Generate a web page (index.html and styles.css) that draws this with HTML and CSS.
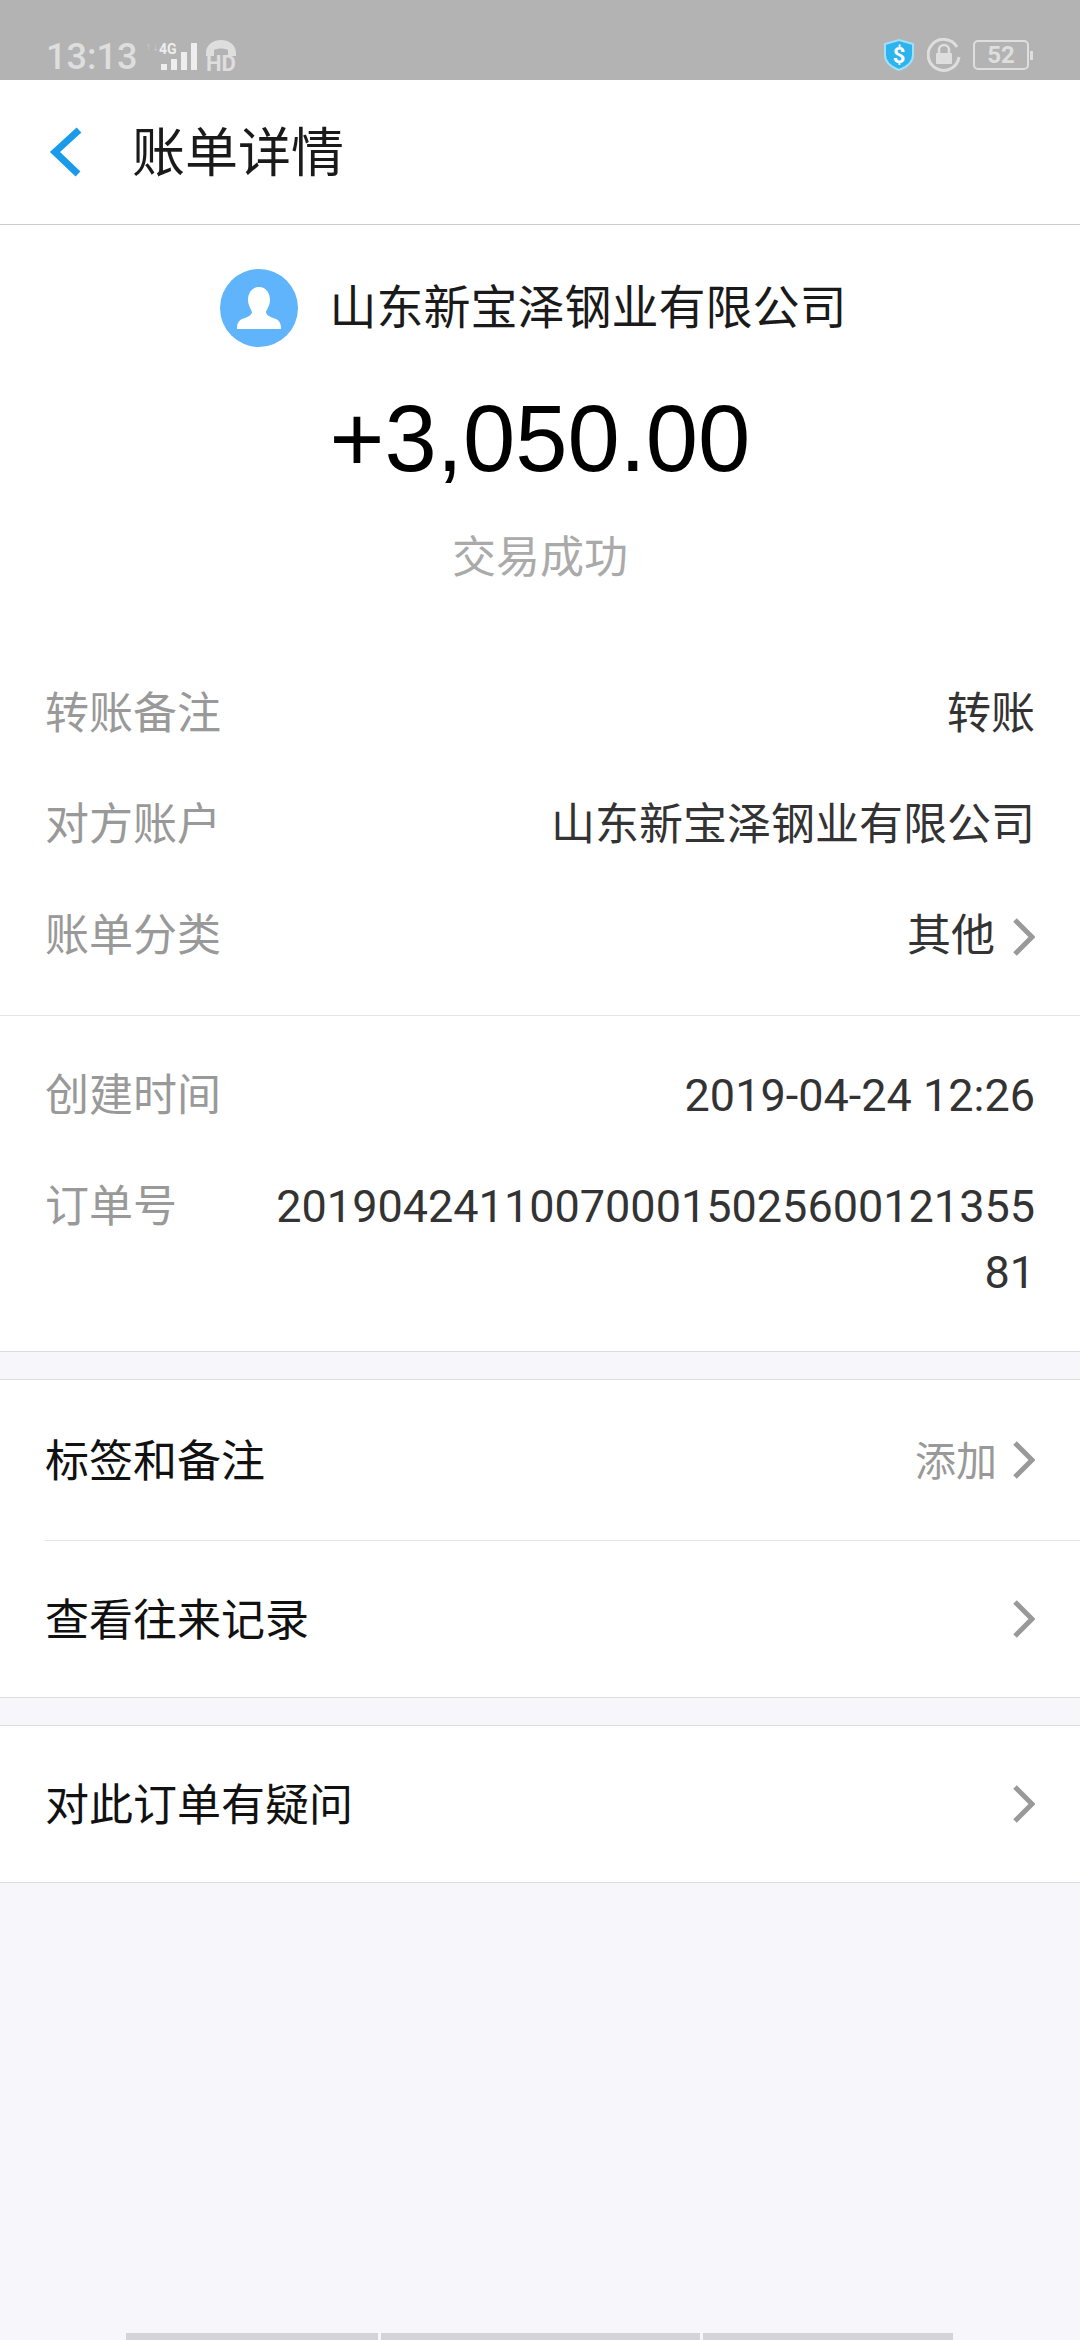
FILE: index.html
```html
<!DOCTYPE html>
<html lang="zh-CN">
<head>
    <title>账单详情</title>
    <link rel="stylesheet" href="styles.css">
</head>
<body>
    <div class="status-bar">
        <div class="status-left">
            <span class="time">13:13</span>
            <svg class="signal" width="54" height="30" viewBox="0 0 54 30">
                <text x="0" y="8" class="tiny">↑↓</text>
                <text x="14" y="12" class="net">4G</text>
                <rect x="16" y="22" width="6" height="6"/>
                <rect x="26" y="17" width="6" height="11"/>
                <rect x="36" y="10" width="6" height="18"/>
                <rect x="46" y="1" width="6" height="27"/>
            </svg>
            <svg class="hd" width="32" height="34" viewBox="0 0 32 34">
                <path d="M1 13C1 4 9 0 16 0s15 4 15 13v3h-8v-6c-4-2-10-2-14 0v6H1z"/>
                <text x="1" y="31" class="hd-text" textLength="30" lengthAdjust="spacingAndGlyphs">HD</text>
            </svg>
        </div>
        <div class="status-right">
            <svg width="32" height="34" viewBox="0 0 32 34">
                <path d="M16 2l14 4v11c0 8-6 12-14 15C8 29 2 25 2 17V6z" fill="#2db4ee" stroke="#9fe0fb" stroke-width="2"/>
                <text x="16" y="25" class="dollar">$</text>
            </svg>
            <svg width="34" height="34" viewBox="0 0 34 34">
                <path d="M30 9A15.500 15.500 0 1 0 32 19" fill="none" stroke="#dedede" stroke-width="3"/>
                <rect x="9" y="15" width="16" height="11" rx="1" fill="#dedede"/>
                <path d="M12 15v-3a5 5 0 0 1 10 0v3" fill="none" stroke="#dedede" stroke-width="2.500"/>
            </svg>
            <div class="battery">
                <div class="battery-body">52</div>
                <div class="battery-tip"></div>
            </div>
        </div>
    </div>

    <div class="nav">
        <svg class="back" width="34" height="50" viewBox="0 0 34 50">
            <path d="M30 3L6 25l23 22" fill="none" stroke="#1a9bea" stroke-width="7"/>
        </svg>
        <h1>账单详情</h1>
    </div>

    <div class="section">
        <div class="summary">
            <div class="payee">
                <svg width="78" height="78" viewBox="0 0 78 78">
                    <circle cx="39" cy="39" r="39" fill="#5fb4fc"/>
                    <path d="M39 18c7 0 11 6 11 13 0 5-3 9-4 12 0 3 4 5 10 7 4 2 5 5 5 10H17c0-5 1-8 5-10 6-2 10-4 10-7-1-3-4-7-4-12 0-7 4-13 11-13z" fill="#fff"/>
                </svg>
                <span class="payee-name">山东新宝泽钢业有限公司</span>
            </div>
            <div class="amount">+3,050.00</div>
            <div class="state">交易成功</div>
        </div>

        <div class="info-group">
            <div class="info-row">
                <span class="label">转账备注</span>
                <span class="value">转账</span>
            </div>
            <div class="info-row">
                <span class="label">对方账户</span>
                <span class="value">山东新宝泽钢业有限公司</span>
            </div>
            <div class="info-row">
                <span class="label">账单分类</span>
                <span class="value with-arrow">其他
                    <svg class="arrow" width="22" height="40" viewBox="0 0 22 40"><path d="M2 3l17 17L2 37" fill="none" stroke="#999" stroke-width="5"/></svg>
                </span>
            </div>
        </div>

        <div class="info-group second">
            <div class="info-row">
                <span class="label">创建时间</span>
                <span class="value num">2019-04-24 12:26</span>
            </div>
            <div class="info-row">
                <span class="label">订单号</span>
                <span class="value num">20190424110070001502560012135581</span>
            </div>
        </div>
    </div>

    <div class="section action-section">
        <div class="action-row tag-row">
            <span>标签和备注</span>
            <span class="action-tail"><span class="add">添加</span>
                <svg class="arrow" width="22" height="40" viewBox="0 0 22 40"><path d="M2 3l17 17L2 37" fill="none" stroke="#999" stroke-width="5"/></svg>
            </span>
        </div>
        <div class="action-row">
            <span>查看往来记录</span>
            <span class="action-tail">
                <svg class="arrow" width="22" height="40" viewBox="0 0 22 40"><path d="M2 3l17 17L2 37" fill="none" stroke="#999" stroke-width="5"/></svg>
            </span>
        </div>
    </div>

    <div class="section action-section">
        <div class="action-row">
            <span>对此订单有疑问</span>
            <span class="action-tail">
                <svg class="arrow" width="22" height="40" viewBox="0 0 22 40"><path d="M2 3l17 17L2 37" fill="none" stroke="#999" stroke-width="5"/></svg>
            </span>
        </div>
    </div>

    <div class="spacer"></div>

    <div class="home-bars">
        <div class="home-bar left"></div>
        <div class="home-bar middle"></div>
        <div class="home-bar right"></div>
    </div>
</body>
</html>
```

FILE: styles.css
```css
html, body {
    height: 100%;
}
body {
    margin: 0;
    height: 2340px;
    display: flex;
    flex-direction: column;
    overflow: hidden;
    font-family: Roboto, "Noto Sans CJK SC", sans-serif;
    background-color: #f6f6fb;
    color: #111;
}
.status-bar {
    height: 80px;
    box-sizing: border-box;
    padding: 38px 47px 0 46px;
    display: flex;
    justify-content: space-between;
    align-items: flex-start;
    background-color: #b3b3b3;
}
.status-left {
    display: flex;
    align-items: center;
    gap: 8px;
}
.time {
    font-size: 36px;
    font-weight: 500;
    line-height: 38px;
    color: #dedede;
}
.signal {
    overflow: visible;
}
.signal rect {
    fill: #eee;
}
.tiny {
    font-size: 7px;
    fill: #ccc;
}
.net {
    font-size: 14px;
    font-weight: bold;
    fill: #eee;
}
.hd {
    margin-left: -2px;
    fill: #dedede;
}
.hd-text {
    font-size: 22px;
    font-weight: bold;
    fill: #dedede;
}
.status-right {
    display: flex;
    align-items: center;
    gap: 12px;
}
.dollar {
    font-size: 22px;
    font-weight: bold;
    fill: #fff;
    text-anchor: middle;
}
.battery {
    display: flex;
    align-items: center;
    gap: 1px;
}
.battery-body {
    width: 56px;
    height: 30px;
    box-sizing: border-box;
    border: 2px solid #dedede;
    border-radius: 5px;
    text-align: center;
    font-size: 24px;
    font-weight: 700;
    line-height: 26px;
    color: #dedede;
}
.battery-tip {
    width: 3px;
    height: 9px;
    background-color: #dedede;
}
.nav {
    height: 145px;
    box-sizing: border-box;
    padding-left: 49px;
    display: flex;
    align-items: center;
    background-color: white;
    border-bottom: 1px solid #ccc;
}
.back {
    margin-right: 49px;
}
h1 {
    margin: -6px 0 0 0;
    font-size: 53px;
    font-weight: 400;
    color: #1a1a1a;
}
.section {
    background-color: white;
    border-bottom: 1px solid #ddd;
}
.summary {
    height: 456px;
    box-sizing: border-box;
    padding-top: 43px;
    text-align: center;
}
.payee {
    display: flex;
    justify-content: center;
    align-items: center;
    gap: 32px;
    height: 80px;
    padding-right: 14px;
}
.payee-name {
    margin-top: -10px;
    font-size: 47px;
    color: #1a1a1a;
}
.amount {
    margin-top: 33px;
    font-family: "Liberation Sans", sans-serif;
    font-size: 94px;
    line-height: 116px;
    color: #000;
}
.state {
    margin-top: 28px;
    font-size: 44px;
    line-height: 66px;
    color: #aaa;
}
.info-group {
    padding: 0 0 1px 45px;
    border-bottom: 1px solid #e5e5e5;
}
.info-group.second {
    padding-top: 47px;
    padding-bottom: 0;
    border-bottom: none;
}
.info-row {
    display: grid;
    grid-template-columns: 220px 770px;
    padding-bottom: 45px;
    font-size: 44px;
    line-height: 66px;
}
.label {
    color: #999;
}
.value {
    color: #333;
    text-align: right;
    word-break: break-all;
}
.num {
    font-size: 45px;
}
.with-arrow {
    display: flex;
    justify-content: flex-end;
    align-items: center;
    gap: 18px;
}
.with-arrow .arrow {
    margin-top: 2px;
}
.action-section {
    margin-top: 27px;
    border-top: 1px solid #ddd;
}
.action-row {
    height: 156px;
    box-sizing: border-box;
    margin-left: 45px;
    padding: 0 45px 5px 0;
    display: flex;
    justify-content: space-between;
    align-items: center;
    font-size: 44px;
    border-bottom: 1px solid #e5e5e5;
}
.tag-row {
    height: 161px;
}
.action-row:last-child {
    border-bottom: none;
}
.arrow {
    margin-top: 5px;
}
.action-tail {
    display: flex;
    align-items: center;
    gap: 16px;
}
.add {
    font-size: 41px;
    color: #999;
}
.spacer {
    flex: 1;
}
.home-bars {
    height: 7px;
    padding-left: 126px;
    display: flex;
    gap: 3px;
}
.home-bar {
    background-color: #d3d3d8;
}
.home-bar.left {
    width: 252px;
}
.home-bar.middle {
    width: 319px;
}
.home-bar.right {
    width: 250px;
}
```
